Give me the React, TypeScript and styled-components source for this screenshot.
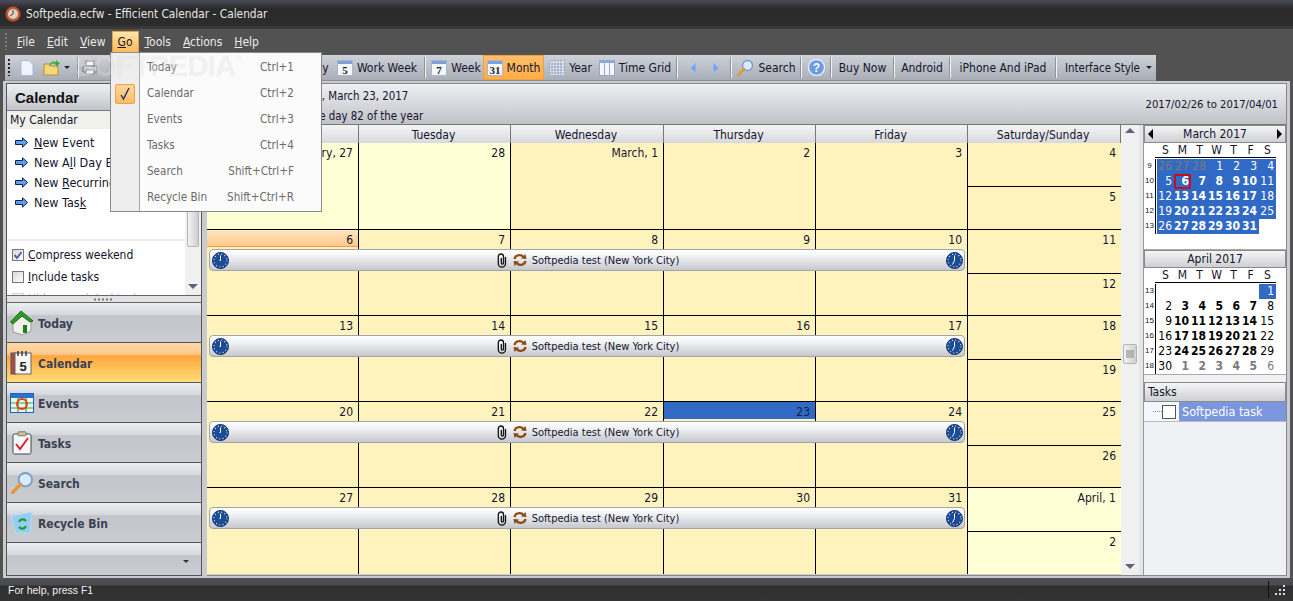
import React from "react";
import styled, { createGlobalStyle } from "styled-components";

const Global = createGlobalStyle`
  html, body { margin: 0; padding: 0; height: 601px; overflow: hidden; background: #525252; }
  body { font-family: "DejaVu Sans", "Liberation Sans", sans-serif; font-stretch: condensed; font-size: 12px; color: #14142e; }
  * { box-sizing: border-box; }
  u { text-decoration: underline; text-underline-offset: 1px; }
`;

const Window = styled.div`
  position: relative;
  width: 1293px;
  height: 601px;
  display: flex;
  flex-direction: column;
  overflow: hidden;
  background: #525252;
`;

const TitleBar = styled.div`
  height: 29px;
  display: flex;
  align-items: center;
  gap: 5px;
  padding: 0 0 1px 5px;
  font-size: 11.8px;
  color: #e6e6e6;
  background: linear-gradient(#4a4c58 0, #33343a 6px, #292929 9px, #2c2c2c 24px, #3c3c3c 100%);
`;

const MenuBar = styled.div`
  height: 24px;
  display: flex;
  align-items: center;
  padding: 1px 0 0 5px;
  font-size: 12px;
  color: #ececec;
`;

const Grip = styled.span<{ $c?: string }>`
  width: 2px;
  height: 17px;
  flex: none;
  margin-right: 4px;
  background: repeating-linear-gradient(${(p) => p.$c || "#7a7a7a"} 0 2px, transparent 2px 4px);
`;

const MenuTitle = styled.span<{ $active?: boolean }>`
  height: 22px;
  line-height: 21px;
  padding: 0 5px;
  border: 1px solid transparent;
  ${(p) => p.$active && `background: linear-gradient(#ffe6a8, #ffb75a); border-color: #e0a050; color: #1a1a1a;`}
`;

const ToolRow = styled.div`
  height: 28px;
  padding: 2px 0 0 5px;
  display: flex;
`;

const Toolbar = styled.div`
  width: 1151px;
  height: 26px;
  display: flex;
  align-items: center;
  padding-left: 3px;
  background: linear-gradient(#cfd2d8, #a9adb5);
  border-bottom: 1px solid #8e9198;
`;

const ToolBtn = styled.span<{ $w: number; $active?: boolean; $start?: boolean; $small?: boolean }>`
  width: ${(p) => p.$w}px;
  height: 25px;
  flex: none;
  display: flex;
  align-items: center;
  justify-content: ${(p) => (p.$start ? "flex-start" : "center")};
  gap: 4px;
  white-space: nowrap;
  color: #15152e;
  ${(p) => p.$small && "font-size: 11.4px; gap: 6px;"}
  ${(p) => p.$active && `background: linear-gradient(#ffc06a, #ffab45); outline: 1px solid #f0a040; outline-offset: -1px;`}
`;

const ToolSep = styled.span<{ $ml?: number }>`
  width: 2px;
  height: 21px;
  flex: none;
  margin: 0 3px 0 ${(p) => p.$ml ?? 3}px;
  background: #f2f3f5;
  border-left: 1px solid #8f9299;
`;

const Workspace = styled.div`
  flex: 1;
  min-height: 0;
  margin: 0 3px;
  padding: 2px 3px 2px 3px;
  display: flex;
  gap: 5px;
  background: #c9cbcf;
`;

const LeftPanel = styled.div`
  width: 196px;
  flex: none;
  display: flex;
  flex-direction: column;
  background: #fff;
  border: 1px solid #555;
`;

const PanelTitle = styled.div`
  height: 27px;
  flex: none;
  padding-left: 8px;
  display: flex;
  align-items: center;
  font-family: "Liberation Sans", sans-serif;
  font-size: 15px;
  font-weight: 700;
  color: #111;
  background: linear-gradient(#eef0f3, #c3c5cb);
  border-bottom: 1px solid #777;
`;

const PanelSub = styled.div`
  height: 18px;
  flex: none;
  line-height: 18px;
  padding-left: 3px;
  background: #f1f1ec;
`;

const PanelBody = styled.div`
  height: 166px;
  flex: none;
  display: flex;
  overflow: hidden;
`;

const PanelList = styled.div`
  flex: 1;
  min-width: 0;
  display: flex;
  flex-direction: column;
  overflow: hidden;
`;

const TaskLinks = styled.div`
  height: 112px;
  flex: none;
  padding-top: 3px;
  display: flex;
  flex-direction: column;
  border-bottom: 2px solid #f0f0f0;
`;

const TaskLink = styled.div`
  height: 20px;
  display: flex;
  align-items: center;
  gap: 6px;
  padding-left: 8px;
  font-size: 12.5px;
  white-space: nowrap;
`;

const Checks = styled.div`
  padding: 7px 0 0 5px;
  display: flex;
  flex-direction: column;
  gap: 8px;
`;

const CheckRow = styled.div<{ $faded?: boolean }>`
  height: 14px;
  flex: none;
  display: flex;
  align-items: center;
  gap: 4px;
  white-space: nowrap;
  opacity: ${(p) => (p.$faded ? 0.3 : 1)};
`;

const CheckBox = styled.span`
  width: 12px;
  height: 12px;
  flex: none;
  display: flex;
  align-items: center;
  justify-content: center;
  background: linear-gradient(135deg, #d8d8d8, #fff);
  border: 1px solid #777;
`;

const VScroll = styled.div<{ $w: number }>`
  position: relative;
  width: ${(p) => p.$w}px;
  flex: none;
  background: #eff0ef;
  display: flex;
  flex-direction: column;
  justify-content: space-between;
  align-items: center;
  padding: 3px 0 6px;
`;

const ScrollThumb = styled.span<{ $top: number; $h: number }>`
  position: absolute;
  left: 2px;
  right: 2px;
  top: ${(p) => p.$top}px;
  height: ${(p) => p.$h}px;
  display: flex;
  align-items: center;
  justify-content: center;
  background: linear-gradient(90deg, #f2f2f2, #cfcfcf);
  border: 1px solid #b5b5b5;
  border-radius: 2px;
`;

const Arrow = styled.span<{ $dir: "up" | "down" }>`
  width: 0;
  height: 0;
  border-left: 5px solid transparent;
  border-right: 5px solid transparent;
  ${(p) => (p.$dir === "up" ? "border-bottom: 5px solid #5a6480;" : "border-top: 5px solid #5a6480;")}
`;

const Splitter = styled.div`
  height: 8px;
  flex: none;
  display: flex;
  align-items: center;
  justify-content: center;
  background: #e2e3e6;
  border-top: 1px solid #666;
  border-bottom: 1px solid #666;
`;

const NavButton = styled.div<{ $active?: boolean }>`
  height: 40px;
  flex: none;
  display: flex;
  align-items: center;
  gap: 4px;
  padding: 3px 0 0 3px;
  font-size: 12px;
  font-weight: 700;
  color: #3b4152;
  border-bottom: 1px solid #555;
  background: ${(p) =>
    p.$active
      ? "linear-gradient(#ffd9a8 0, #ffc98c 11px, #ffa63e 13px, #ffdc78 100%)"
      : "linear-gradient(#eeeff1 0, #d9dadd 11px, #c1c4ca 13px, #cbcdd2 100%)"};
  & > svg { flex: none; margin-top: -3px; }
`;

const NavFooter = styled.div`
  flex: 1;
  display: flex;
  align-items: flex-end;
  justify-content: flex-end;
  padding: 0 12px 12px 0;
  background: linear-gradient(#eeeff1 0, #d9dadd 11px, #c1c4ca 13px, #cbcdd2 100%);
`;

const SmallCaret = styled.span<{ $c?: string }>`
  width: 0;
  height: 0;
  flex: none;
  display: inline-block;
  border-left: 3px solid transparent;
  border-right: 3px solid transparent;
  border-top: 3px solid ${(p) => p.$c || "#222"};
`;

const RightArea = styled.div`
  flex: 1;
  min-width: 0;
  display: flex;
  flex-direction: column;
  border: 1px solid #8a8a8a;
  border-left: 0;
`;

const DateHeader = styled.div`
  height: 41px;
  flex: none;
  display: flex;
  justify-content: space-between;
  padding: 2px 8px 0 23px;
  font-size: 11.4px;
  line-height: 20px;
  background: linear-gradient(#eef0f3, #c0c2c8);
  border-bottom: 1px solid #777;
  white-space: nowrap;
`;

const DateRange = styled.div`
  align-self: center;
  font-size: 11.2px;
`;

const Lower = styled.div`
  flex: 1;
  min-height: 0;
  display: flex;
`;

const CalendarArea = styled.div`
  width: 914px;
  flex: none;
  display: flex;
  flex-direction: column;
`;

const cols = "152px 152px 153px 152px 152px 153px";

const DayHeads = styled.div`
  height: 18px;
  flex: none;
  display: grid;
  grid-template-columns: ${cols};
`;

const DayHead = styled.div`
  padding-right: 2px;
  line-height: 20px;
  text-align: center;
  background: linear-gradient(#f5f5f6, #d5d6da);
  border-right: 1px solid #777;
  border-bottom: 1px solid #777;
`;

const Week = styled.div<{ $h: number }>`
  position: relative;
  height: ${(p) => p.$h}px;
  flex: none;
  display: grid;
  grid-template-columns: ${cols};
  border-bottom: 1px solid #000;
  &:last-child { border-bottom: 0; }
`;

const DayCell = styled.div<{ $other?: boolean }>`
  background: ${(p) => (p.$other ? "#ffffd5" : "#fff3bd")};
  border-right: 1px solid #000;
`;

const DayNum = styled.div<{ $kind?: "today" | "sel" }>`
  height: 17px;
  line-height: 21px;
  padding-right: 5px;
  text-align: right;
  ${(p) => p.$kind === "sel" && "background: linear-gradient(#ffe6c4, #ffc98a); border-bottom: 1px solid #ff9a40;"}
  ${(p) => p.$kind === "today" && "background: #316ac5; color: #10204a;"}
`;

const SplitCell = styled.div`
  display: grid;
  grid-template-rows: 1fr 1fr;
`;

const SplitPart = styled.div<{ $other?: boolean }>`
  background: ${(p) => (p.$other ? "#ffffd5" : "#fff3bd")};
  & + & { border-top: 1px solid #000; }
`;

const EventBar = styled.div`
  position: absolute;
  left: 2px;
  top: 19px;
  width: 756px;
  height: 22px;
  display: flex;
  align-items: center;
  justify-content: space-between;
  padding: 0 1px 0 2px;
  border: 1px solid #a0a4ac;
  border-radius: 4px;
  background: linear-gradient(#ffffff, #f2f3f5 30%, #c6c8ce);
  white-space: nowrap;
  font-size: 11px;
`;

const EventCenter = styled.span`
  display: flex;
  align-items: center;
  gap: 4px;
`;

const SidePanel = styled.div`
  flex: 1;
  min-width: 0;
  display: flex;
  background: #e4e5e8;
`;

const SideColumn = styled.div`
  width: 144px;
  margin-left: 4px;
  display: flex;
  flex-direction: column;
  background: #f0f1f4;
  border-left: 1px solid #999;
`;

const MonthHead = styled.div<{ $center?: boolean }>`
  height: 18px;
  flex: none;
  padding: 0 3px;
  display: flex;
  align-items: center;
  justify-content: ${(p) => (p.$center ? "center" : "space-between")};
  background: linear-gradient(#f5f5f6, #cfd0d4);
  border: 1px solid #8a8a8a;
`;

const Triangle = styled.span<{ $dir: "left" | "right" }>`
  width: 0;
  height: 0;
  border-top: 5px solid transparent;
  border-bottom: 5px solid transparent;
  ${(p) => (p.$dir === "left" ? "border-right: 5px solid #000;" : "border-left: 5px solid #000;")}
`;

const MonthBlock = styled.div`
  height: 107px;
  flex: none;
  padding-top: 1px;
  background: #fff;
  border-bottom: 1px solid #aaa;
`;

const MonthGrid = styled.div`
  display: grid;
  grid-template-columns: 13px repeat(7, 17px);
  grid-template-rows: 13px 2px;
  grid-auto-rows: 15px;
  font-size: 12px;
  line-height: 15px;
`;

const WeekDayLabel = styled.div`
  text-align: center;
  line-height: 13px;
`;

const WeekNo = styled.div`
  font-size: 8px;
  font-family: "Liberation Sans", sans-serif;
  text-align: center;
  border-right: 1px solid #000;
  width: 12px;
  line-height: 14px;
`;

const HeaderRule = styled.div`
  grid-column: 2 / span 7;
  margin-left: -2px;
  width: 121px;
  height: 2px;
  border-top: 1px solid #000;
`;

const MiniDay = styled.div<{ $sel?: boolean; $bold?: boolean; $dim?: boolean; $today?: boolean }>`
  padding-right: 2px;
  text-align: right;
  font-weight: ${(p) => (p.$bold ? 700 : 400)};
  color: ${(p) => (p.$dim ? "#7a7a7a" : p.$sel ? "#fff" : "#000")};
  background: ${(p) => (p.$sel ? "#316ac5" : "transparent")};
  ${(p) => p.$today && "outline: 2px solid #c4101a; outline-offset: -2px;"}
`;

const TasksHead = styled.div`
  height: 20px;
  flex: none;
  margin-top: 7px;
  padding-left: 3px;
  line-height: 19px;
  background: linear-gradient(#f5f5f6, #cfd0d4);
  border: 1px solid #8a8a8a;
`;

const TaskRow = styled.div`
  height: 20px;
  flex: none;
  display: flex;
  align-items: center;
  padding-left: 9px;
  border-bottom: 1px solid #bbb;
  background: #f2f6fd;
`;

const TaskDots = styled.span`
  width: 9px;
  border-top: 1px dotted #888;
`;

const TaskBox = styled.span`
  width: 14px;
  height: 14px;
  margin-right: 3px;
  background: #fff;
  border: 1px solid #555;
`;

const TaskName = styled.span`
  flex: 1;
  height: 19px;
  line-height: 19px;
  padding-left: 3px;
  color: #fff;
  background: #7b96dd;
  font-size: 12.5px;
`;

const StatusBar = styled.div`
  height: 23px;
  flex: none;
  display: flex;
  align-items: center;
  justify-content: space-between;
  padding: 0 7px 0 8px;
  font-family: "Liberation Sans", sans-serif;
  font-size: 10.5px;
  color: #f0f0f0;
  background: linear-gradient(#4d4f55 0, #4a4a4c 7px, #2f2f2f 8px, #333 100%);
`;

const StatusEnd = styled.div`
  display: flex;
  align-items: center;
  gap: 5px;
`;

const StatusSep = styled.span`
  width: 1px;
  height: 17px;
  background: #111;
`;

const PopMenu = styled.div`
  position: absolute;
  left: 110px;
  top: 52px;
  width: 212px;
  height: 160px;
  padding-top: 1px;
  font-size: 11.6px;
  background: linear-gradient(90deg, #eeeeee 28px, #a8a8a8 28px, #a8a8a8 29px, #fbfbfb 29px);
  border: 1px solid #8a8a8a;
  color: #6b6b6b;
`;

const PopItem = styled.div`
  height: 26px;
  display: flex;
  align-items: center;
  justify-content: space-between;
  padding: 0 27px 0 36px;
`;

const PopCheck = styled.span`
  position: absolute;
  left: 4px;
  top: 31px;
  width: 20px;
  height: 20px;
  display: flex;
  align-items: center;
  justify-content: center;
  background: linear-gradient(#ffd79a, #ffbd68);
  border: 1px solid #f0a040;
  border-radius: 2px;
`;

const Watermark = styled.div`
  position: absolute;
  left: 75px;
  top: 50px;
  font-family: "Liberation Sans", sans-serif;
  font-stretch: normal;
  font-size: 29px;
  font-weight: 700;
  letter-spacing: -0.6px;
  color: rgba(255, 255, 255, 0.3);
  text-shadow: 0 0 1px rgba(120, 120, 120, 0.12);
  pointer-events: none;
  white-space: nowrap;
  & sup { font-size: 9px; font-weight: 400; vertical-align: 14px; }
`;

const Cal = ({ n, size = 16 }: { n: string; size?: number }) => (
  <svg width={size} height={size} viewBox="0 0 16 16">
    <rect x="0.5" y="0.5" width="15" height="15" fill="#f4f6fa" stroke="#a9b6cc" />
    <rect x="1" y="1" width="14" height="3" fill="#7fa0d8" />
    <text x="8" y="14" fontSize="11" fontWeight="700" fontFamily="Liberation Serif, serif" textAnchor="middle" fill="#222">
      {n}
    </text>
  </svg>
);

const YearIcon = () => (
  <svg width="16" height="16" viewBox="0 0 16 16">
    <rect x="0.5" y="0.5" width="15" height="15" fill="#eef1f8" stroke="#a9b6cc" />
    <path d="M0 4h16M0 7h16M0 10h16M0 13h16M3 1v15M6 1v15M9 1v15M12 1v15" stroke="#9aa6c0" strokeWidth="1" />
  </svg>
);

const GridIcon = () => (
  <svg width="16" height="16" viewBox="0 0 16 16">
    <rect x="0.5" y="0.5" width="15" height="15" fill="#f4f6fb" stroke="#94a9cc" />
    <path d="M1 1h14v2H1z" fill="#8aa8dc" />
    <path d="M5.5 1v14M10.5 1v14" stroke="#94a9cc" />
  </svg>
);

const Magnifier = ({ size = 18 }: { size?: number }) => (
  <svg width={size} height={size} viewBox="0 0 18 18">
    <circle cx="11.5" cy="6.5" r="5" fill="#d6ecff" stroke="#7d9cc8" strokeWidth="1.4" />
    <path d="M8 10L2 16" stroke="#e09a3c" strokeWidth="2.6" strokeLinecap="round" />
  </svg>
);

const Printer = () => (
  <svg width="16" height="15" viewBox="0 0 16 15">
    <path d="M4 1h8v5H4z" fill="#f4f6fa" stroke="#888" />
    <path d="M1 6h14v6H1z" fill="#c8ccd4" stroke="#777" />
    <path d="M4 10h8v4H4z" fill="#fff" stroke="#888" />
  </svg>
);

const Clock = ({ right }: { right?: boolean }) => (
  <svg width="17" height="17" viewBox="0 0 17 17">
    <circle cx="8.5" cy="8.5" r="8" fill="#1c4c96" stroke="#0d2f6b" />
    <circle cx="8.5" cy="8.5" r="6.5" fill="none" stroke="#dfe8f6" strokeWidth="1.2" strokeDasharray="1 2.4" />
    <path d={right ? "M8.5 3.5v5l-2 4" : "M8.5 3.5v5h-1"} stroke="#fff" strokeWidth="1" fill="none" />
  </svg>
);

const Clip = () => (
  <svg width="12" height="15" viewBox="0 0 12 15">
    <path
      d="M9.5 4v6.5a3.6 3.6 0 0 1-7.2 0V3.6a2.6 2.6 0 0 1 5.2 0V10a1.1 1.1 0 0 1-2.2 0V5"
      fill="none"
      stroke="#111"
      strokeWidth="1.3"
    />
  </svg>
);

const Recur = () => (
  <svg width="16" height="14" viewBox="0 0 15 14">
    <path d="M2 6a5 4.5 0 0 1 9-2" fill="none" stroke="#8c4a10" strokeWidth="2.2" />
    <path d="M8.5 5.5L14 6l-1-5z" fill="#8c4a10" />
    <path d="M13 8a5 4.5 0 0 1-9 2" fill="none" stroke="#8c4a10" strokeWidth="2.2" />
    <path d="M6.5 8.5L1 8l1 5z" fill="#8c4a10" />
  </svg>
);

const BlueArrow = () => (
  <svg width="13" height="11" viewBox="0 0 13 11">
    <path d="M0.5 3.5h7V.8l5 4.7-5 4.7V7.5h-7z" fill="#5aa0f0" stroke="#10204e" strokeWidth="1" />
  </svg>
);

const HomeIcon = () => (
  <svg width="24" height="26" viewBox="0 0 24 26">
    <path d="M3 12v10l10 3 8-4V11l-9-5z" fill="#f1f1ea" stroke="#999" />
    <path d="M0.5 12L11 1l12 10-3 1-8-6-9 8z" fill="#2f9c2a" stroke="#186a18" />
    <rect x="13" y="15" width="4" height="8" fill="#1f7d1f" />
  </svg>
);

const CalBookIcon = () => (
  <svg width="24" height="26" viewBox="0 0 24 26">
    <rect x="1" y="3" width="5" height="21" fill="#b04a4a" stroke="#555" />
    <rect x="5" y="3" width="16" height="21" fill="#f6f6f4" stroke="#666" />
    <path d="M8 1v5M12 1v5M16 1v5" stroke="#333" strokeWidth="1.4" />
    <text x="13" y="21" fontSize="13" fontWeight="700" fontFamily="Liberation Sans, sans-serif" textAnchor="middle" fill="#222">
      5
    </text>
  </svg>
);

const EventsIcon = () => (
  <svg width="24" height="20" viewBox="0 0 24 20">
    <rect x="0.5" y="0.5" width="23" height="19" fill="#e8f7e8" stroke="#1f62b8" />
    <rect x="1" y="1" width="22" height="4" fill="#2a74cc" />
    <path d="M1 10h22M1 15h22M8 5v14M16 5v14" stroke="#3aa04a" strokeWidth="1.2" />
    <circle cx="12" cy="11" r="5" fill="none" stroke="#e0401a" strokeWidth="2" />
  </svg>
);

const TasksIcon = () => (
  <svg width="24" height="24" viewBox="0 0 22 24">
    <rect x="2" y="3" width="18" height="20" rx="1.5" fill="#f5f9ff" stroke="#444" />
    <rect x="7" y="0.8" width="8" height="4" rx="1" fill="#d8c08c" stroke="#777" />
    <path d="M5 13l4 5 8-11" fill="none" stroke="#e0232a" strokeWidth="2" />
  </svg>
);

const BinIcon = () => (
  <svg width="24" height="24" viewBox="0 0 24 24">
    <path d="M1 5l21-4 -2 21H6z" fill="#96cdf2" stroke="#b8ddf5" />
    <path d="M9 11a4 4 0 0 1 7-1M16 15a4 4 0 0 1-7 1" fill="none" stroke="#1f9a2f" strokeWidth="2.2" />
  </svg>
);

const eventTitle = "Softpedia test (New York City)";

type Cell = { n: string; other?: boolean; kind?: "today" | "sel" };

const weeks: { h: number; days: Cell[]; sat: Cell; sun: Cell; ev: boolean }[] = [
  {
    h: 87,
    ev: false,
    days: [
      { n: "February, 27", other: true },
      { n: "28", other: true },
      { n: "March, 1" },
      { n: "2" },
      { n: "3" },
    ],
    sat: { n: "4" },
    sun: { n: "5" },
  },
  {
    h: 86,
    ev: true,
    days: [{ n: "6", kind: "sel" }, { n: "7" }, { n: "8" }, { n: "9" }, { n: "10" }],
    sat: { n: "11" },
    sun: { n: "12" },
  },
  {
    h: 86,
    ev: true,
    days: [{ n: "13" }, { n: "14" }, { n: "15" }, { n: "16" }, { n: "17" }],
    sat: { n: "18" },
    sun: { n: "19" },
  },
  {
    h: 86,
    ev: true,
    days: [{ n: "20" }, { n: "21" }, { n: "22" }, { n: "23", kind: "today" }, { n: "24" }],
    sat: { n: "25" },
    sun: { n: "26" },
  },
  {
    h: 86,
    ev: true,
    days: [{ n: "27" }, { n: "28" }, { n: "29" }, { n: "30" }, { n: "31" }],
    sat: { n: "April, 1", other: true },
    sun: { n: "2", other: true },
  },
];

type Mini = { t?: string; s?: boolean; b?: boolean; d?: boolean; x?: boolean };
const r = (t: string, b = false, s = false, d = false): Mini => ({ t, b, s, d });
const range = (a: number, z: number, b = false, s = false, d = false) => {
  const out: Mini[] = [];
  for (let i = a; i <= z; i++) out.push(r(String(i), b, s, d));
  return out;
};
const blank = (n: number): Mini[] => Array.from({ length: n }, () => ({}));

const march: [number, Mini[]][] = [
  [9, [...range(26, 28, false, true, true), ...range(1, 4, false, true)]],
  [10, [r("5", false, true), { t: "6", b: true, s: true, x: true }, ...range(7, 10, true, true), r("11", false, true)]],
  [11, [r("12", false, true), ...range(13, 17, true, true), r("18", false, true)]],
  [12, [r("19", false, true), ...range(20, 24, true, true), r("25", false, true)]],
  [13, [r("26", false, true), ...range(27, 31, true, true), ...blank(1)]],
];

const april: [number, Mini[]][] = [
  [13, [...blank(6), r("1", false, true)]],
  [14, [r("2"), ...range(3, 7, true), r("8")]],
  [15, [r("9"), ...range(10, 14, true), r("15")]],
  [16, [r("16"), ...range(17, 21, true), r("22")]],
  [17, [r("23"), ...range(24, 28, true), r("29")]],
  [18, [r("30"), ...range(1, 5, true, false, true), r("6", false, false, true)]],
];

const MonthTable = ({ rows }: { rows: [number, Mini[]][] }) => (
  <MonthGrid>
    <WeekDayLabel />
    {["S", "M", "T", "W", "T", "F", "S"].map((d, i) => (
      <WeekDayLabel key={i}>{d}</WeekDayLabel>
    ))}
    <div />
    <HeaderRule />
    {rows.map(([no, days]) => (
      <React.Fragment key={no}>
        <WeekNo>{no}</WeekNo>
        {days.map((c, i) => (
          <MiniDay key={i} $sel={c.s} $bold={c.b} $dim={c.d} $today={c.x}>
            {c.t}
          </MiniDay>
        ))}
      </React.Fragment>
    ))}
  </MonthGrid>
);

const menu = [
  ["Today", "Ctrl+1"],
  ["Calendar", "Ctrl+2"],
  ["Events", "Ctrl+3"],
  ["Tasks", "Ctrl+4"],
  ["Search", "Shift+Ctrl+F"],
  ["Recycle Bin", "Shift+Ctrl+R"],
];

export default function App() {
  return (
    <Window>
      <Global />
      <TitleBar>
        <svg width="16" height="16" viewBox="0 0 16 16">
          <circle cx="8" cy="8" r="7.5" fill="#c9502f" />
          <circle cx="8" cy="8" r="5" fill="#d9d4c6" />
          <path d="M8 4v4l-3 2" stroke="#444" fill="none" />
        </svg>
        Softpedia.ecfw - Efficient Calendar - Calendar
      </TitleBar>
      <MenuBar>
        <Grip />
        <MenuTitle><u>F</u>ile</MenuTitle>
        <MenuTitle><u>E</u>dit</MenuTitle>
        <MenuTitle><u>V</u>iew</MenuTitle>
        <MenuTitle $active><u>G</u>o</MenuTitle>
        <MenuTitle><u>T</u>ools</MenuTitle>
        <MenuTitle><u>A</u>ctions</MenuTitle>
        <MenuTitle><u>H</u>elp</MenuTitle>
      </MenuBar>
      <ToolRow>
        <Toolbar>
          <Grip $c="#222" />
          <ToolBtn $w={26}>
            <svg width="14" height="16" viewBox="0 0 14 16">
              <path d="M1 .5h8l4 4v11H1z" fill="#eef4fd" stroke="#a8bcd8" />
            </svg>
          </ToolBtn>
          <ToolBtn $w={24}>
            <svg width="18" height="16" viewBox="0 0 18 16">
              <path d="M1 4h6l1 2h7v9H1z" fill="#f4d87a" stroke="#b89030" />
              <path d="M6 7a5 5 0 0 1 7-5V0l4 3.500-4 3.500V5a4 4 0 0 0-7 2z" fill="#40a840" />
            </svg>
          </ToolBtn>
          <SmallCaret />
          <ToolSep $ml={7} />
          <ToolBtn $w={221} $start><Printer /></ToolBtn>
          <ToolBtn $w={30}>Day</ToolBtn>
          <ToolBtn $w={88}><Cal n="5" />Work Week</ToolBtn>
          <ToolSep />
          <ToolBtn $w={54}><Cal n="7" />Week</ToolBtn>
          <ToolBtn $w={61} $active><Cal n="31" />Month</ToolBtn>
          <ToolBtn $w={53}><YearIcon />Year</ToolBtn>
          <ToolBtn $w={76}><GridIcon />Time Grid</ToolBtn>
          <ToolSep />
          <ToolBtn $w={24}>
            <svg width="8" height="12" viewBox="0 0 8 12"><path d="M7 .5v11L1 6z" fill="#7aa4e8" stroke="#a8c2ec" /></svg>
          </ToolBtn>
          <ToolBtn $w={22}>
            <svg width="8" height="12" viewBox="0 0 8 12"><path d="M1 .5v11L7 6z" fill="#7aa4e8" stroke="#a8c2ec" /></svg>
          </ToolBtn>
          <ToolSep />
          <ToolBtn $w={62}><Magnifier />Search</ToolBtn>
          <ToolSep />
          <ToolBtn $w={22}>
            <svg width="17" height="17" viewBox="0 0 17 17">
              <circle cx="8.5" cy="8.5" r="8" fill="#6f9bdf" stroke="#e2ecfa" strokeWidth="1.4" />
              <text x="8.5" y="13" fontSize="12" fontWeight="700" fontFamily="Liberation Sans, sans-serif" textAnchor="middle" fill="#fff">?</text>
            </svg>
          </ToolBtn>
          <ToolSep />
          <ToolBtn $w={55}>Buy Now</ToolBtn>
          <ToolSep />
          <ToolBtn $w={48}>Android</ToolBtn>
          <ToolSep />
          <ToolBtn $w={98}>iPhone And iPad</ToolBtn>
          <ToolSep />
          <ToolBtn $w={97} $small>
            Interface Style<SmallCaret />
          </ToolBtn>
        </Toolbar>
      </ToolRow>
      <Workspace>
        <LeftPanel>
          <PanelTitle>Calendar</PanelTitle>
          <PanelSub>My Calendar</PanelSub>
          <PanelBody>
            <PanelList>
              <TaskLinks>
                <TaskLink><BlueArrow /><span><u>N</u>ew Event</span></TaskLink>
                <TaskLink><BlueArrow /><span>New A<u>l</u>l Day Event</span></TaskLink>
                <TaskLink><BlueArrow /><span>New <u>R</u>ecurring Event</span></TaskLink>
                <TaskLink><BlueArrow /><span>New Tas<u>k</u></span></TaskLink>
              </TaskLinks>
              <Checks>
                <CheckRow>
                  <CheckBox>
                    <svg width="10" height="10" viewBox="0 0 10 10"><path d="M1.5 5l2.5 3 4.5-6" fill="none" stroke="#4a6aa8" strokeWidth="2" /></svg>
                  </CheckBox>
                  <span><u>C</u>ompress weekend</span>
                </CheckRow>
                <CheckRow>
                  <CheckBox />
                  <span><u>I</u>nclude tasks</span>
                </CheckRow>
                <CheckRow $faded>
                  <CheckBox />
                  <span>Hide completed tasks</span>
                </CheckRow>
              </Checks>
            </PanelList>
            <VScroll $w={16}>
              <Arrow $dir="up" />
              <ScrollThumb $top={60} $h={58} />
              <Arrow $dir="down" />
            </VScroll>
          </PanelBody>
          <Splitter>
            <svg width="20" height="3" viewBox="0 0 20 3">
              <path d="M0 1.5h20" stroke="#777" strokeWidth="2" strokeDasharray="2 2" />
            </svg>
          </Splitter>
          <NavButton><HomeIcon />Today</NavButton>
          <NavButton $active><CalBookIcon />Calendar</NavButton>
          <NavButton><EventsIcon />Events</NavButton>
          <NavButton><TasksIcon />Tasks</NavButton>
          <NavButton><Magnifier size={24} />Search</NavButton>
          <NavButton><BinIcon />Recycle Bin</NavButton>
          <NavFooter><SmallCaret $c="#333" /></NavFooter>
        </LeftPanel>
        <RightArea>
          <DateHeader>
            <div>
              <div>Today is Thursday, March 23, 2017</div>
              <div>Today's date is the day 82 of the year</div>
            </div>
            <DateRange>2017/02/26 to 2017/04/01</DateRange>
          </DateHeader>
          <Lower>
            <CalendarArea>
              <DayHeads>
                {["Monday", "Tuesday", "Wednesday", "Thursday", "Friday", "Saturday/Sunday"].map((d) => (
                  <DayHead key={d}>{d}</DayHead>
                ))}
              </DayHeads>
              {weeks.map((w, i) => (
                <Week key={i} $h={w.h}>
                  {w.days.map((c) => (
                    <DayCell key={c.n} $other={c.other}>
                      <DayNum $kind={c.kind}>{c.n}</DayNum>
                    </DayCell>
                  ))}
                  <SplitCell>
                    <SplitPart $other={w.sat.other}><DayNum>{w.sat.n}</DayNum></SplitPart>
                    <SplitPart $other={w.sun.other}><DayNum>{w.sun.n}</DayNum></SplitPart>
                  </SplitCell>
                  {w.ev && (
                    <EventBar>
                      <Clock />
                      <EventCenter>
                        <Clip />
                        <Recur />
                        {eventTitle}
                      </EventCenter>
                      <Clock right />
                    </EventBar>
                  )}
                </Week>
              ))}
            </CalendarArea>
            <SidePanel>
              <VScroll $w={18}>
                <Arrow $dir="up" />
                <ScrollThumb $top={219} $h={20}>
                  <svg width="8" height="8" viewBox="0 0 8 8"><path d="M0 1h8M0 3h8M0 5h8M0 7h8" stroke="#888" /></svg>
                </ScrollThumb>
                <Arrow $dir="down" />
              </VScroll>
              <SideColumn>
                <MonthHead>
                  <Triangle $dir="left" />March 2017<Triangle $dir="right" />
                </MonthHead>
                <MonthBlock>
                  <MonthTable rows={march} />
                </MonthBlock>
                <MonthHead $center>April 2017</MonthHead>
                <MonthBlock>
                  <MonthTable rows={april} />
                </MonthBlock>
                <TasksHead>Tasks</TasksHead>
                <TaskRow>
                  <TaskDots />
                  <TaskBox />
                  <TaskName>Softpedia task</TaskName>
                </TaskRow>
              </SideColumn>
            </SidePanel>
          </Lower>
        </RightArea>
      </Workspace>
      <StatusBar>
        For help, press F1
        <StatusEnd>
          <StatusSep />
          <svg width="12" height="12" viewBox="0 0 12 12">
            <path d="M9 1h2v2H9zM5 5h2v2H5zM9 5h2v2H9zM1 9h2v2H1zM5 9h2v2H5zM9 9h2v2H9z" fill="#ddd" />
          </svg>
        </StatusEnd>
      </StatusBar>
      <PopMenu>
        <PopCheck>
          <svg width="12" height="14" viewBox="0 0 12 14"><path d="M2 8l2.5 4L10 1" fill="none" stroke="#1f2f70" strokeWidth="1.4" /></svg>
        </PopCheck>
        {menu.map(([a, b]) => (
          <PopItem key={a}>
            <span>{a}</span>
            <span>{b}</span>
          </PopItem>
        ))}
      </PopMenu>
      <Watermark>SOFTPEDIA<sup>®</sup></Watermark>
    </Window>
  );
}
